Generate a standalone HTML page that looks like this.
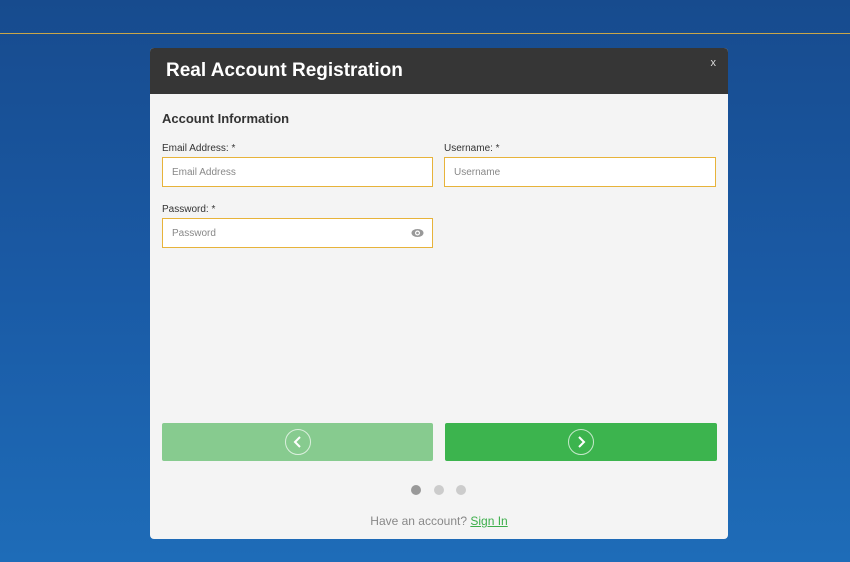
<!DOCTYPE html>
<html><head><style>
*{margin:0;padding:0;box-sizing:border-box}
body{width:850px;height:562px;overflow:hidden;font-family:"Liberation Sans",Arial,sans-serif;background:linear-gradient(180deg,#174b8e 0%,#1a5aa5 50%,#1e6cb8 100%);position:relative}
.line{position:absolute;left:0;top:33px;width:850px;height:1px;background:#c9a64a}
.modal{position:absolute;left:150px;top:48px;width:578px;height:491px;background:#f4f4f4;border-radius:4px;overflow:hidden}
.hd{height:46px;background:#363636;color:#fff;font-weight:bold;font-size:19px;padding:12px 0 0 16px}
.x{position:absolute;right:12px;top:9px;color:#ddd;font-size:11px;font-weight:normal}
h3{position:absolute;left:12px;top:63px;font-size:13px;color:#333}
.lbl{position:absolute;font-size:10px;color:#333}
.in{position:absolute;height:30px;background:#fff;border:1px solid #e7b33a;font-size:10px;color:#888;padding:9px 0 0 9px}
.btn{position:absolute;top:375px;height:38px;border-radius:2px}
.c{position:absolute;left:50%;top:6px;margin-left:-13px;width:26px;height:26px;border:1px solid rgba(255,255,255,.7);border-radius:50%}
.dot{position:absolute;top:437px;width:10px;height:10px;border-radius:50%;background:#ccc}
.ft{position:absolute;top:466px;width:100%;text-align:center;font-size:12px;color:#888}
.ft a{color:#3cae4a;text-decoration:underline}
</style></head><body>
<div class="line"></div>
<div class="modal">
<div class="hd">Real Account Registration<span class="x">x</span></div>
<h3>Account Information</h3>
<div class="lbl" style="left:12px;top:95px">Email Address: *</div>
<div class="lbl" style="left:294px;top:95px">Username: *</div>
<div class="in" style="left:12px;top:109px;width:271px">Email Address</div>
<div class="in" style="left:294px;top:109px;width:272px">Username</div>
<div class="lbl" style="left:12px;top:156px">Password: *</div>
<div class="in" style="left:12px;top:170px;width:271px">Password
<svg style="position:absolute;right:8px;top:9px" width="13" height="10" viewBox="0 0 13 10"><ellipse cx="6.5" cy="5" rx="6" ry="4" fill="#999"/><circle cx="6.5" cy="5" r="2.5" fill="#fff"/><circle cx="6.5" cy="5" r="1.3" fill="#999"/></svg></div>
<div class="btn" style="left:12px;width:271px;background:#87cb8f"><div class="c"><svg width="24" height="24" viewBox="0 0 24 24"><path d="M14 7l-5 5 5 5" stroke="#fff" stroke-width="2" fill="none"/></svg></div></div>
<div class="btn" style="left:295px;width:272px;background:#3cb44e"><div class="c"><svg width="24" height="24" viewBox="0 0 24 24"><path d="M10 7l5 5-5 5" stroke="#fff" stroke-width="2" fill="none"/></svg></div></div>
<div class="dot" style="left:261px;background:#999"></div>
<div class="dot" style="left:284px"></div>
<div class="dot" style="left:306px"></div>
<div class="ft">Have an account? <a>Sign In</a></div>
</div>
</body></html>
